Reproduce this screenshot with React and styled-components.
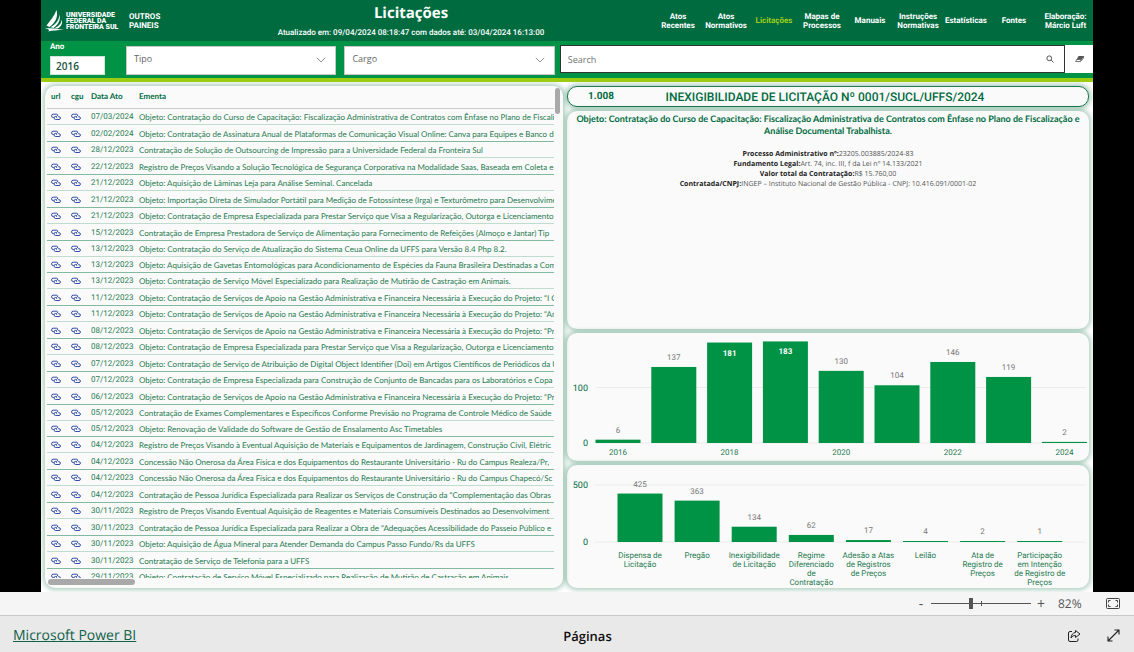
import React, { useState } from 'react';
import styled, { createGlobalStyle, css } from 'styled-components';

const rows = [
  ['07/03/2024', 'Objeto: Contratação do Curso de Capacitação: Fiscalização Administrativa de Contratos com Ênfase no Plano de Fiscaliz'],
  ['02/02/2024', 'Objeto: Contratação de Assinatura Anual de Plataformas de Comunicação Visual Online: Canva para Equipes e Banco de'],
  ['28/12/2023', 'Contratação de Solução de Outsourcing de Impressão para a Universidade Federal da Fronteira Sul'],
  ['22/12/2023', 'Registro de Preços Visando a Solução Tecnológica de Segurança Corporativa na Modalidade Saas, Baseada em Coleta e'],
  ['21/12/2023', 'Objeto: Aquisição de Lâminas Leja para Análise Seminal. Cancelada'],
  ['21/12/2023', 'Objeto: Importação Direta de Simulador Portátil para Medição de Fotossíntese (Irga) e Texturômetro para Desenvolvime'],
  ['21/12/2023', 'Objeto: Contratação de Empresa Especializada para Prestar Serviço que Visa a Regularização, Outorga e Licenciamento'],
  ['15/12/2023', 'Contratação de Empresa Prestadora de Serviço de Alimentação para Fornecimento de Refeições (Almoço e Jantar) Tip'],
  ['13/12/2023', 'Objeto: Contratação do Serviço de Atualização do Sistema Ceua Online da UFFS para Versão 8.4 Php 8.2.'],
  ['13/12/2023', 'Objeto: Aquisição de Gavetas Entomológicas para Acondicionamento de Espécies da Fauna Brasileira Destinadas a Com'],
  ['13/12/2023', 'Objeto: Contratação de Serviço Móvel Especializado para Realização de Mutirão de Castração em Animais.'],
  ['11/12/2023', 'Objeto: Contratação de Serviços de Apoio na Gestão Administrativa e Financeira Necessária à Execução do Projeto: “I C'],
  ['11/12/2023', 'Objeto: Contratação de Serviços de Apoio na Gestão Administrativa e Financeira Necessária à Execução do Projeto: “An'],
  ['08/12/2023', 'Objeto: Contratação de Serviços de Apoio na Gestão Administrativa e Financeira Necessária à Execução do Projeto: “Pr'],
  ['08/12/2023', 'Objeto: Contratação de Empresa Especializada para Prestar Serviço que Visa a Regularização, Outorga e Licenciamento'],
  ['07/12/2023', 'Objeto: Contratação de Serviço de Atribuição de Digital Object Identifier (Doi) em Artigos Científicos de Periódicos da UF'],
  ['07/12/2023', 'Objeto: Contratação de Empresa Especializada para Construção de Conjunto de Bancadas para os Laboratórios e Copa'],
  ['06/12/2023', 'Objeto: Contratação de Serviços de Apoio na Gestão Administrativa e Financeira Necessária à Execução do Projeto: “Pr'],
  ['05/12/2023', 'Contratação de Exames Complementares e Específicos Conforme Previsão no Programa de Controle Médico de Saúde'],
  ['05/12/2023', 'Objeto: Renovação de Validade do Software de Gestão de Ensalamento Asc Timetables'],
  ['04/12/2023', 'Registro de Preços Visando à Eventual Aquisição de Materiais e Equipamentos de Jardinagem, Construção Civil, Elétric'],
  ['04/12/2023', 'Concessão Não Onerosa da Área Física e dos Equipamentos do Restaurante Universitário - Ru do Campus Realeza/Pr,'],
  ['04/12/2023', 'Concessão Não Onerosa da Área Física e dos Equipamentos do Restaurante Universitário - Ru do Campus Chapecó/Sc'],
  ['04/12/2023', 'Contratação de Pessoa Jurídica Especializada para Realizar os Serviços de Construção da “Complementação das Obras'],
  ['30/11/2023', 'Registro de Preços Visando Eventual Aquisição de Reagentes e Materiais Consumíveis Destinados ao Desenvolviment'],
  ['30/11/2023', 'Contratação de Pessoa Jurídica Especializada para Realizar a Obra de “Adequações Acessibilidade do Passeio Público e'],
  ['30/11/2023', 'Objeto: Aquisição de Água Mineral para Atender Demanda do Campus Passo Fundo/Rs da UFFS'],
  ['30/11/2023', 'Contratação de Serviço de Telefonia para a UFFS'],
  ['29/11/2023', 'Objeto: Contratação de Serviço Móvel Especializado para Realização de Mutirão de Castração em Animais.'],
];

const navItems = ['Atos Recentes', 'Atos Normativos', 'Licitações', 'Mapas de Processos', 'Manuais', 'Instruções Normativas', 'Estatísticas', 'Fontes'];

const years = [
  { value: 6, label: ['2016'] },
  { value: 137 },
  { value: 181, label: ['2018'], inside: true },
  { value: 183, inside: true },
  { value: 130, label: ['2020'] },
  { value: 104 },
  { value: 146, label: ['2022'] },
  { value: 119 },
  { value: 2, label: ['2024'] },
];

const kinds = [
  { value: 425, label: ['Dispensa de', 'Licitação'] },
  { value: 363, label: ['Pregão'] },
  { value: 134, label: ['Inexigibilidade', 'de Licitação'] },
  { value: 62, label: ['Regime', 'Diferenciado', 'de', 'Contratação'] },
  { value: 17, label: ['Adesão a Atas', 'de Registros', 'de Preços'] },
  { value: 4, label: ['Leilão'] },
  { value: 2, label: ['Ata de', 'Registro de', 'Preços'] },
  { value: 1, label: ['Participação', 'em Intenção', 'de Registro de', 'Preços'] },
];

function BarChart({ title, data, height, base, scale, first, step, labelY, top, left, right }) {
  const topY = base - top * scale;
  return (
    <Chart viewBox={`0 0 522 ${height}`} role="img" aria-label={title}>
      <line className="grid" x1={left} x2={right} y1={topY} y2={topY} />
      <line className="grid" x1={left} x2={right} y1={base} y2={base} />
      <text className="axis" x="21" y={topY + 3}>{top}</text>
      <text className="axis" x="21" y={base + 3}>0</text>
      {data.map((d, i) => {
        const x = first + i * step;
        const h = Math.max(d.value * scale, 1);
        const valueY = d.inside ? base - h + 13 : base - h - 7;
        return (
          <g key={i}>
            <rect x={x - 22.5} y={base - h} width="45" height={h} />
            <text className={d.inside ? 'inside' : 'value'} x={x} y={valueY}>{d.value}</text>
            {d.label && d.label.map((line, n) => (
              <text key={line} className="label" x={x} y={labelY + n * 9}>{line}</text>
            ))}
          </g>
        );
      })}
    </Chart>
  );
}

function LinkIcon() {
  return (
    <svg width="10" height="8" viewBox="0 0 10 8" fill="none" stroke="#1d3aa0" strokeWidth="0.9">
      <path d="M2.800 4.500H2.200A1.500 1.500 0 0 1 2.200 1.200H5.800A1.200 1.200 0 0 1 6.500 3" />
      <path d="M4.600 6.500A1.500 1.500 0 0 1 4.600 3.400H5.600V4.800M4.600 6.500H8A1.400 1.400 0 0 0 8 3.700H7.200" />
    </svg>
  );
}

function Chevron() {
  return (
    <svg width="10" height="6" viewBox="0 0 10 6" fill="none" stroke="#777" strokeWidth="0.8">
      <path d="M0.8 0.8L5 5L9.2 0.8" />
    </svg>
  );
}

function App() {
  const [year, setYear] = useState('2016');
  const [search, setSearch] = useState('');
  const [zoom, setZoom] = useState(40);

  return (
    <>
      <GlobalStyle />
      <Stage>
        <Header>
          <Brand>
            <svg width="20" height="22" viewBox="0 0 20 22" fill="#fff">
              <path d="M11.500 0C9 6 6 10 1.500 15.500L4.500 17C10 13 13.500 7 11.500 0Z" />
              <path d="M14.300 4.500C14.500 10 11 14 5.500 17.200L8.500 18C13.500 14.500 16 9.500 14.300 4.500Z" />
              <path d="M16.600 9.500C16.500 13.500 14 16 9.500 18.200L12.500 18.600C16.500 16.500 18 13 16.600 9.500Z" />
              <path d="M0 18C6 17.800 11 19 19 19.600C13 20.200 7 20.700 3 21.500C5 20.300 4 19 0 18Z" />
            </svg>
            <BrandName>UNIVERSIDADE<br />FEDERAL DA<br />FRONTEIRA SUL</BrandName>
            <NavLink href="#paineis">OUTROS<br />PAINEIS</NavLink>
          </Brand>
          <Heading>
            <Title>Licitações</Title>
            <Updated>Atualizado em: 09/04/2024 08:18:47 com dados até: 03/04/2024 16:13:00</Updated>
          </Heading>
          <Nav>
            {navItems.map((item) => (
              <NavItem key={item} href={`#${item}`} $active={item === 'Licitações'}>{item}</NavItem>
            ))}
            <Author>Elaboração:<br />Márcio Luft</Author>
          </Nav>
        </Header>

        <Filters>
          <YearField>
            Ano
            <input value={year} onChange={(e) => setYear(e.target.value)} />
          </YearField>
          <SelectBox>
            <select aria-label="Tipo"><option>Tipo</option></select>
            <Chevron />
          </SelectBox>
          <SelectBox>
            <select aria-label="Cargo"><option>Cargo</option></select>
            <Chevron />
          </SelectBox>
          <SearchBox>
            <input aria-label="Search" placeholder="Search" value={search} onChange={(e) => setSearch(e.target.value)} />
            <IconButton aria-label="Buscar">
              <svg width="8" height="8" viewBox="0 0 8 8" fill="none" stroke="#444" strokeWidth="0.9">
                <circle cx="3.300" cy="3.300" r="2.400" />
                <path d="M5 5L7.500 7.500" />
              </svg>
            </IconButton>
          </SearchBox>
          <ClearButton aria-label="Limpar" onClick={() => setSearch('')}>
            <svg width="9" height="8" viewBox="0 0 9 8">
              <path d="M3.500 1H8.500L6.500 4.500H1.600Z" fill="#555" />
              <path d="M1.600 4.500H6.300L5.300 6.500H0.700ZM6.500 4.500L8.500 1V3L5.500 6.500" fill="none" stroke="#555" strokeWidth="0.800" />
            </svg>
          </ClearButton>
        </Filters>

        <Main>
          <TablePanel>
            <Scroller>
              <Table>
                <thead>
                  <tr>
                    <th>url</th>
                    <th>cgu</th>
                    <th>Data Ato</th>
                    <th>Ementa</th>
                  </tr>
                </thead>
                <tbody>
                  {rows.map(([date, text], i) => (
                    <tr key={i}>
                      <td><a href="#url" aria-label="url"><LinkIcon /></a></td>
                      <td><a href="#cgu" aria-label="cgu"><LinkIcon /></a></td>
                      <DateCell>{date}</DateCell>
                      <td>{text}</td>
                    </tr>
                  ))}
                </tbody>
              </Table>
            </Scroller>
            <ThumbY />
            <ThumbX />
          </TablePanel>

          <Side>
            <Pill>
              <Count>1.008</Count>
              <PillTitle>INEXIGIBILIDADE DE LICITAÇÃO Nº 0001/SUCL/UFFS/2024</PillTitle>
            </Pill>
            <Detail>
              <DetailTitle>
                Objeto: Contratação do Curso de Capacitação: Fiscalização Administrativa de Contratos com Ênfase no Plano de Fiscalização e Análise Documental Trabalhista.
              </DetailTitle>
              <DetailLine><b>Processo Administrativo nº:</b>23205.003885/2024-83</DetailLine>
              <DetailLine><b>Fundamento Legal:</b>Art. 74, inc. III, f da Lei nº 14.133/2021</DetailLine>
              <DetailLine><b>Valor total da Contratação:</b>R$ 15.760,00</DetailLine>
              <DetailLine><b>Contratada/CNPJ:</b>INGEP – Instituto Nacional de Gestão Pública - CNPJ: 10.416.091/0001-02</DetailLine>
            </Detail>
            <Panel>
              <BarChart title="Licitações por ano" data={years} height={128} base={110} scale={0.555} first={51} step={55.8} labelY={122} top={100} left={29} right={519} />
            </Panel>
            <Panel>
              <BarChart title="Licitações por tipo" data={kinds} height={123} base={77} scale={0.114} first={73} step={57.1} labelY={93} top={500} left={28} right={518} />
            </Panel>
          </Side>
        </Main>
      </Stage>

      <ZoomBar>
        <ZoomButton aria-label="Menos zoom">-</ZoomButton>
        <Range type="range" aria-label="Zoom" value={zoom} onChange={(e) => setZoom(e.target.value)} />
        <ZoomButton aria-label="Mais zoom">+</ZoomButton>
        <ZoomValue>82%</ZoomValue>
        <IconButton aria-label="Ajustar à página">
          <svg width="14" height="11" viewBox="0 0 14 11" fill="none" stroke="#444">
            <rect x="0.5" y="0.5" width="13" height="10" rx="1" />
            <path d="M2.500 4.500V2.500H4.500M9.500 2.500H11.500V4.500M11.500 6.500V8.500H9.500M4.500 8.500H2.500V6.500" />
          </svg>
        </IconButton>
      </ZoomBar>
      <Footer>
        <FooterLink href="#powerbi">Microsoft Power BI</FooterLink>
        <Pages>Páginas</Pages>
        <FooterActions>
          <IconButton aria-label="Compartilhar">
            <svg width="14" height="14" viewBox="0 0 14 14" fill="none" stroke="#222" strokeLinejoin="round">
              <path d="M5 2.500H3A1.500 1.500 0 0 0 1.500 4V11A1.500 1.500 0 0 0 3 12.500H9.500A1.500 1.500 0 0 0 11 11V9.500" />
              <path d="M8.500 1.500L13 5L8.500 8.500V6.500C6.500 6.300 5 7.300 4 9C4.200 6 5.800 3.800 8.500 3.500Z" />
            </svg>
          </IconButton>
          <IconButton aria-label="Tela cheia">
            <svg width="13" height="13" viewBox="0 0 13 13" fill="none" stroke="#222" strokeWidth="1.1">
              <path d="M1 12L12 1M7.500 1H12V5.500M1 7.500V12H5.500" />
            </svg>
          </IconButton>
        </FooterActions>
      </Footer>
    </>
  );
}

export default App;

const din = css`
  font-family: Roboto, "Liberation Sans", sans-serif;
`

/* for the long lines, which need a narrower face */
const narrow = css`
  font-family: Lato, Roboto, sans-serif;
`

const segoe = css`
  font-family: "Open Sans", "Noto Sans", sans-serif;
`

const GlobalStyle = createGlobalStyle`
  * {
    box-sizing: border-box;
  }
  body {
    margin: 0;
    background: #e9e9e9;
    ${din}
    color: #006b3f;
    text-rendering: geometricPrecision;
  }
  button, input, select {
    font: inherit;
    color: inherit;
  }
  svg {
    display: block;
  }
`

const Stage = styled.div`
  padding: 0 41px;
  background: #000;
`

const Header = styled.header`
  display: grid;
  grid-template-columns: 127px 1fr auto;
  height: 41px;
  background: #006b3f;
  color: #fff;
`

const Brand = styled.div`
  display: flex;
  align-items: center;
  padding-left: 4px;
`

const BrandName = styled.div`
  width: 64px;
  padding-left: 1px;
  font-size: 7px;
  line-height: 6px;
  font-weight: 900;
  white-space: nowrap;
`

const NavLink = styled.a`
  color: #fff;
  font-size: 8px;
  line-height: 9px;
  font-weight: 700;
  text-decoration: none;
`

const Heading = styled.div`
  text-align: center;
  padding-top: 3px;
`

const Title = styled.h1`
  margin: 0;
  ${segoe}
  font-size: 15px;
  line-height: 20px;
  font-weight: 700;
`

const Updated = styled.p`
  margin: 5px 0 0;
  font-size: 8px;
  line-height: 10px;
  font-weight: 500;
`

const Nav = styled.nav`
  display: flex;
  align-items: center;
`

const NavItem = styled(NavLink)`
  width: 48px;
  text-align: center;
  color: ${(props) => (props.$active ? '#9fce1a' : '#fff')};
`

const Author = styled.div`
  width: 55px;
  font-size: 8px;
  line-height: 9px;
  font-weight: 700;
  text-align: center;
`

const Filters = styled.div`
  display: flex;
  height: 41px;
  background: #009245;
  border-bottom: 4px solid #9ccc12;
`

const YearField = styled.label`
  width: 55px;
  margin: 0 21px 0 9px;
  color: #fff;
  font-size: 8px;
  line-height: 12px;
  font-weight: 700;

  input {
    display: block;
    width: 100%;
    height: 19px;
    margin-top: 3px;
    padding: 0 5px;
    border: 1px solid #cfe8da;
    background: #fff;
    color: #20503c;
    ${segoe}
    font-size: 10px;
    font-weight: 600;
  }
`

const SelectBox = styled.div`
  position: relative;
  flex: 0 0 20%;
  height: 29px;
  margin: 5px 8px 0 0;

  select {
    appearance: none;
    width: 100%;
    height: 100%;
    padding: 0 7px 4px;
    border: 1px solid #c8c8c8;
    border-radius: 0;
    background: #fff;
    color: #666;
    ${segoe}
    font-size: 9px;
  }

  svg {
    position: absolute;
    right: 10px;
    top: 11px;
    pointer-events: none;
  }
`

const SearchBox = styled.div`
  display: flex;
  align-items: center;
  flex: 1;
  height: 28px;
  margin: 4px 0 0 -3px;
  padding-right: 10px;
  border: 1px solid #333;
  background: #fff;

  input {
    flex: 1;
    padding: 0 7px;
    border: none;
    outline: none;
    background: none;
    ${segoe}
    font-size: 9px;
    color: #666;
  }
`

const IconButton = styled.button`
  padding: 0;
  border: none;
  background: none;
  cursor: pointer;
`

const ClearButton = styled(IconButton)`
  display: grid;
  place-items: center;
  width: 28px;
  height: 28px;
  margin-top: 4px;
  background: #fff;
`

const Main = styled.main`
  display: grid;
  grid-template-columns: 518fr 522fr;
  gap: 4px;
  padding: 4px;
  background: #fff;
  overflow: hidden;
`

const Panel = styled.section`
  border-radius: 10px;
  background: #fafafa;
  box-shadow: 0 0 5px 2px rgba(0, 107, 63, 0.32);
  min-width: 0;
`

const TablePanel = styled(Panel)`
  position: relative;
  padding: 0 9px 0 2px;
`

const Scroller = styled.div`
  height: 492px;
  overflow: hidden;
`

const Table = styled.table`
  width: 100%;
  table-layout: fixed;
  border-collapse: separate;
  border-spacing: 0;
  ${narrow}
  font-size: 8px;
  line-height: 10px;
  color: #1f7a50;

  th, td {
    padding: 1px 0 0 4px;
    border-bottom: 1px solid #bfdccf;
    text-align: left;
    white-space: nowrap;
  }
  th {
    height: 23px;
    padding: 0 0 3px 4px;
    border-color: #ccc;
    color: #006b3f;
    font-weight: 700;
  }
  th:nth-child(1), th:nth-child(2) {
    width: 20px;
  }
  th:nth-child(3) {
    width: 48px;
  }
  td {
    height: 16px;
  }
  td:last-child {
    overflow: hidden;
  }
  tr:nth-child(even) td {
    height: 17px;
    border-color: #82b9a0;
  }
  tr:nth-child(10n) td {
    height: 16px;
  }
`

const DateCell = styled.td`
  ${din}
`

const Thumb = styled.div`
  position: absolute;
  border-radius: 3px;
  background: #a9a9a9;
`

const ThumbY = styled(Thumb)`
  top: 2px;
  right: 3px;
  width: 5px;
  height: 26px;
`

const ThumbX = styled(Thumb)`
  left: 3px;
  bottom: 3px;
  width: 87px;
  height: 6px;
`

const Side = styled.div`
  display: flex;
  flex-direction: column;
  gap: 4px;
  min-width: 0;
`

const Pill = styled(Panel)`
  display: flex;
  align-items: center;
  height: 21px;
  border: 1px solid #1f7a50;
`

const Count = styled.div`
  width: 66px;
  text-align: center;
  font-size: 10px;
  font-weight: 700;
`

const PillTitle = styled.h2`
  flex: 1;
  margin: 0;
  padding-right: 72px;
  text-align: center;
  font-size: 12px;
  font-weight: 500;
  white-space: nowrap;
`

const Detail = styled(Panel)`
  height: 218px;
  padding: 2px;
  text-align: center;
  ${segoe}
`

const DetailTitle = styled.h3`
  margin: 0 0 13px;
  ${narrow}
  font-size: 9px;
  line-height: 12px;
  font-weight: 700;
`

const DetailLine = styled.p`
  margin: 0;
  font-size: 7px;
  line-height: 10px;
  color: #555;

  b {
    color: #222;
  }
`

const Chart = styled.svg`
  width: 100%;
  height: auto;
  font-size: 8px;
  text-anchor: middle;

  rect {
    fill: #009245;
  }
  .grid {
    stroke: #ececec;
  }
  .axis {
    font-size: 9px;
    text-anchor: end;
    fill: #006b3f;
  }
  .label {
    fill: #1f7a50;
  }
  .value {
    fill: #777;
  }
  .inside {
    fill: #fff;
    font-weight: 700;
  }
`

const ZoomBar = styled.div`
  display: flex;
  align-items: center;
  justify-content: flex-end;
  height: 24px;
  padding-right: 14px;
  background: #f5f5f5;
  border-bottom: 1px solid #c8c8c8;
  color: #555;
  ${segoe}
`

const ZoomButton = styled(IconButton)`
  width: 14px;
  font-size: 14px;
  line-height: 16px;
`

const Range = styled.input`
  appearance: none;
  width: 100px;
  height: 11px;
  margin: 0 3px;
  /* tick at 100% and the track itself */
  background:
    linear-gradient(#555, #555) 50px center / 1px 5px no-repeat,
    linear-gradient(#555, #555) center / 100% 1px no-repeat;

  &::-webkit-slider-thumb {
    appearance: none;
    width: 4px;
    height: 11px;
    background: #555;
  }
`

const ZoomValue = styled.span`
  width: 36px;
  margin: 0 12px 0 10px;
  font-size: 12px;
`

const Footer = styled.footer`
  display: grid;
  grid-template-columns: 1fr auto 1fr;
  align-items: center;
  height: 36px;
  padding: 3px 14px 0 13px;
  background: #e9e9e9;
  ${segoe}
  font-size: 14px;
`

const FooterLink = styled.a`
  color: #116149;
`

const Pages = styled.span`
  padding-left: 42px;
  color: #111;
  font-size: 13px;
  font-weight: 600;
`

const FooterActions = styled.div`
  display: flex;
  align-items: center;
  justify-content: flex-end;
  gap: 26px;
`
